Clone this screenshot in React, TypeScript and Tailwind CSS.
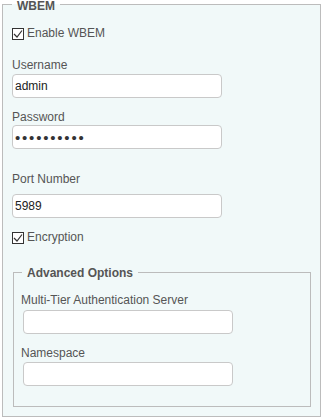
import React from "react";

function Check() {
  return (
    <span className="mt-[2px] mr-[3px] flex h-[12px] w-[12px] shrink-0 items-center justify-center border border-[#333] bg-white">
      <svg width="10" height="10" viewBox="0 0 10 10">
        <path d="M1 5 L4 8 L9 1.5" fill="none" stroke="#333" strokeWidth="1.2" />
      </svg>
    </span>
  );
}

const inputCls =
  "block h-[24px] w-[210px] rounded-[4px] border border-[#c9c9c9] bg-white px-[2px] text-[12px] text-[#222] outline-none";

export default function App() {
  return (
    <div
      className="h-[420px] w-[323px] bg-white text-[12px] leading-[14px] text-[#555]"
      style={{ fontFamily: '"Liberation Sans", Arial, sans-serif' }}
    >
      <fieldset className="ml-[2px] w-[319px] border border-[#bcbcbc] bg-[#f1f9f9] pb-[9px] pl-[9px]">
        <legend className="px-[5px] text-[12px] font-bold leading-[8px] text-[#555]">
          <span className="relative top-[2px]">WBEM</span>
        </legend>
        <div className="mt-[18px] flex items-start">
          <Check />
          <span>Enable WBEM</span>
        </div>
        <div className="mt-[18px]">Username</div>
        <input className={"mt-[2px] " + inputCls} defaultValue="admin" readOnly />
        <div className="mt-[12px]">Password</div>
        <input
          type="password"
          className={"mt-[1px] " + inputCls + " text-[15px] tracking-[1.8px] text-[#333]"}
          defaultValue="aaaaaaaaaa"
          readOnly
        />
        <div className="mt-[23px]">Port Number</div>
        <input className={"mt-[8px] " + inputCls} defaultValue="5989" readOnly />
        <div className="mt-[12px] flex items-start">
          <Check />
          <span>Encryption</span>
        </div>
        <fieldset className="ml-[1px] mt-[24px] w-[298px] border border-[#bcbcbc] pb-[20px] pl-[7px]">
          <legend className="ml-[1px] px-[5px] text-[12px] font-bold leading-[8px] text-[#555]">
            <span className="relative top-[1px]">Advanced Options</span>
          </legend>
          <div className="mt-[17px]">Multi-Tier Authentication Server</div>
          <input className={"ml-[2px] mt-[3px] " + inputCls} defaultValue="" readOnly />
          <div className="mt-[12px]">Namespace</div>
          <input className={"ml-[2px] mt-[2px] " + inputCls} defaultValue="" readOnly />
        </fieldset>
      </fieldset>
    </div>
  );
}
